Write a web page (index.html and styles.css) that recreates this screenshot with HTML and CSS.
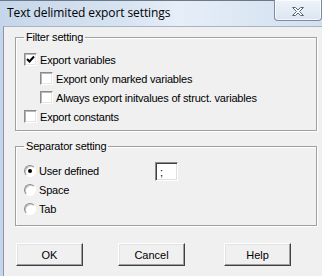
FILE: index.html
```html
<!DOCTYPE html>
<html lang="en">
<head>
    <meta charset="UTF-8">
    <title>Text delimited export settings</title>
    <link rel="stylesheet" href="styles.css">
</head>
<body>

<div class="window">
    <div class="titlebar">
        <span class="title">Text delimited export settings</span>
        <div class="close">
            <svg width="14" height="11" viewBox="0 0 14 11">
                <path d="M1.5 1.5 H4.5 L7 4 L9.5 1.5 H12.5 L8.5 5.5 L12.5 9.5 H9.5 L7 7 L4.5 9.5 H1.5 L5.5 5.5 Z"
                      fill="#fff" stroke="#5a6678" stroke-width="1" stroke-linejoin="round"/>
            </svg>
        </div>
    </div>

    <div class="client">
        <fieldset class="group filter">
            <legend>Filter setting</legend>
            <div class="row">
                <span class="check checked">
                    <svg width="9" height="9" viewBox="0 0 9 9"><path d="M1 4 L3.5 6.5 L8 1.5" fill="none" stroke="#000" stroke-width="2"/></svg>
                </span>
                <span>Export variables</span>
            </div>
            <div class="row sub">
                <span class="check"></span>
                <span>Export only marked variables</span>
            </div>
            <div class="row sub">
                <span class="check"></span>
                <span>Always export initvalues of struct. variables</span>
            </div>
            <div class="row">
                <span class="check"></span>
                <span>Export constants</span>
            </div>
        </fieldset>

        <fieldset class="group separator">
            <legend>Separator setting</legend>
            <div class="row">
                <span class="radio selected"></span>
                <span class="radio-label">User defined</span>
                <span class="textbox">;</span>
            </div>
            <div class="row">
                <span class="radio"></span>
                <span>Space</span>
            </div>
            <div class="row">
                <span class="radio"></span>
                <span>Tab</span>
            </div>
        </fieldset>

        <div class="buttons">
            <button>OK</button>
            <button>Cancel</button>
            <button class="help">Help</button>
        </div>
    </div>
</div>

</body>
</html>
```

FILE: styles.css
```css
body {
    margin: 0;
    background: #f0f0f0;
    font-family: "Liberation Sans", Arial, sans-serif;
    font-size: 11px;
    letter-spacing: -0.2px;
    color: #000;
}
.window {
    width: 322px;
    height: 276px;
    display: flex;
    flex-direction: column;
    background: linear-gradient(90deg, #c6d6ea 0%, #d8e4f2 40%, #e6eef8 55%, #d2e0f0 100%);
    overflow: hidden;
}
.titlebar {
    height: 26px;
    position: relative;
    border-top: 1px solid #6d7889;
    box-sizing: border-box;
}
.title {
    position: absolute;
    left: 7px;
    top: 3px;
    font-family: "Open Sans", "Noto Sans", sans-serif;
    font-size: 12px;
    letter-spacing: -0.1px;
    color: #000;
}
.close {
    position: absolute;
    left: 274px;
    top: -1px;
    width: 48px;
    height: 21px;
    box-sizing: border-box;
    border: 1px solid #7d8ba0;
    border-top: none;
    border-radius: 0 0 4px 4px;
    background: linear-gradient(#eef3f9, #dbe5f1);
    box-shadow: inset 0 0 0 1px rgba(255, 255, 255, 0.7);
    display: flex;
    align-items: center;
    justify-content: center;
    padding-top: 2px;
}
.client {
    flex: 1;
    margin-left: 3px;
    border-left: 1px solid #8a96a8;
    border-top: 1px solid #a8b4c4;
    background: #f0f0f0;
    padding-left: 11px;
}
.group {
    margin: 0;
    width: 302px;
    box-sizing: border-box;
    border: 1px solid #a0a0a0;
    box-shadow: inset 1px 1px 0 #fff, 1px 1px 0 #fff;
    padding: 0 0 0 8px;
}
.group legend {
    padding: 0 2px;
    line-height: 13px;
    margin-left: 0;
}
.filter {
    margin-top: 4px;
    padding-top: 6px;
    padding-bottom: 4px;
}
.separator {
    margin-top: 9px;
    padding-top: 8px;
    padding-bottom: 7px;
}
.row {
    height: 19px;
    display: flex;
    align-items: center;
}
.row.sub {
    padding-left: 16px;
}
.check {
    width: 13px;
    height: 13px;
    box-sizing: border-box;
    background: #fff;
    border: 1px solid;
    border-color: #8c8c8c #fff #fff #8c8c8c;
    box-shadow: inset 1px 1px 0 #b8b8b8, inset -1px -1px 0 #e6e6e6;
    margin-right: 3px;
    display: flex;
    align-items: center;
    justify-content: center;
}
.radio {
    width: 12px;
    height: 12px;
    box-sizing: border-box;
    border-radius: 50%;
    background: #fff;
    border: 1px solid;
    border-color: #8c8c8c #fff #fff #8c8c8c;
    box-shadow: inset 1px 1px 0 #c4c4c4;
    margin-right: 3px;
    position: relative;
}
.radio.selected::after {
    content: "";
    position: absolute;
    left: 3px;
    top: 3px;
    width: 4px;
    height: 4px;
    border-radius: 50%;
    background: #000;
}
.radio-label {
    width: 116px;
}
.textbox {
    width: 23px;
    height: 19px;
    box-sizing: border-box;
    background: #fff;
    border: 1px solid;
    border-color: #8c8c8c #fff #fff #8c8c8c;
    box-shadow: inset 1px 1px 0 #404040, inset -1px -1px 0 #e0e0e0;
    padding: 3px 0 0 4px;
    margin-top: 1px;
    line-height: 13px;
}
.buttons {
    display: flex;
    gap: 35px;
    margin-top: 17px;
    padding-left: 1px;
}
.buttons button {
    width: 67px;
    height: 23px;
    font-family: "Liberation Sans", Arial, sans-serif;
    font-size: 11px;
    background: #f0f0f0;
    border: 1px solid;
    border-color: #fff #404040 #404040 #fff;
    box-shadow: inset -1px -1px 0 #a0a0a0, inset 1px 1px 0 #e3e3e3;
    padding: 0;
    color: #000;
}
.buttons .help {
    margin-left: 4px;
}
```
